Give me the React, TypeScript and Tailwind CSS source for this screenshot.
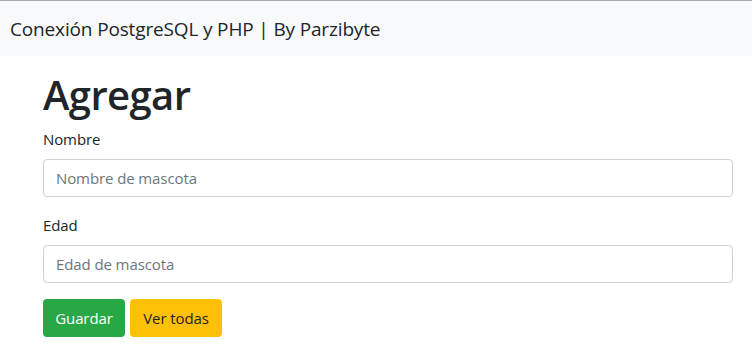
export default function App() {
  const font = { fontFamily: '"Open Sans", "Noto Sans", sans-serif' };
  return (
    <div className="w-[752px] h-[352px] bg-white text-[#212529] overflow-hidden" style={font}>
      <div className="border-t border-[#a9a9a9] bg-[#f8f9fa] h-[56px] flex items-center px-[10px]">
        <span className="text-[19px] leading-[30px] tracking-[-0.15px]">Conexión PostgreSQL y PHP | By Parzibyte</span>
      </div>
      <div className="ml-[43px] w-[690px]">
        <h1 className="text-[40px] leading-[48px] font-semibold mt-[15px] mb-[8px] tracking-[-0.6px]">Agregar</h1>
        <div className="mb-[16px]">
          <label className="block text-[15px] leading-[24px] mb-[8px] tracking-[-0.1px]">Nombre</label>
          <div className="h-[38px] border border-[#ced4da] rounded-[4px] px-[12px] flex items-center text-[15px] text-[#6c757d] tracking-[-0.1px]">Nombre de mascota</div>
        </div>
        <div className="mb-[16px]">
          <label className="block text-[15px] leading-[24px] mb-[8px] tracking-[-0.1px]">Edad</label>
          <div className="h-[38px] border border-[#ced4da] rounded-[4px] px-[12px] flex items-center text-[15px] text-[#6c757d] tracking-[-0.1px]">Edad de mascota</div>
        </div>
        <div className="flex gap-[5px]">
          <button className="h-[38px] w-[82px] rounded-[4px] bg-[#28a745] text-white text-[15px] tracking-[-0.1px]">Guardar</button>
          <button className="h-[38px] w-[92px] rounded-[4px] bg-[#ffc107] text-[#212529] text-[15px] tracking-[-0.1px]">Ver todas</button>
        </div>
      </div>
    </div>
  );
}
